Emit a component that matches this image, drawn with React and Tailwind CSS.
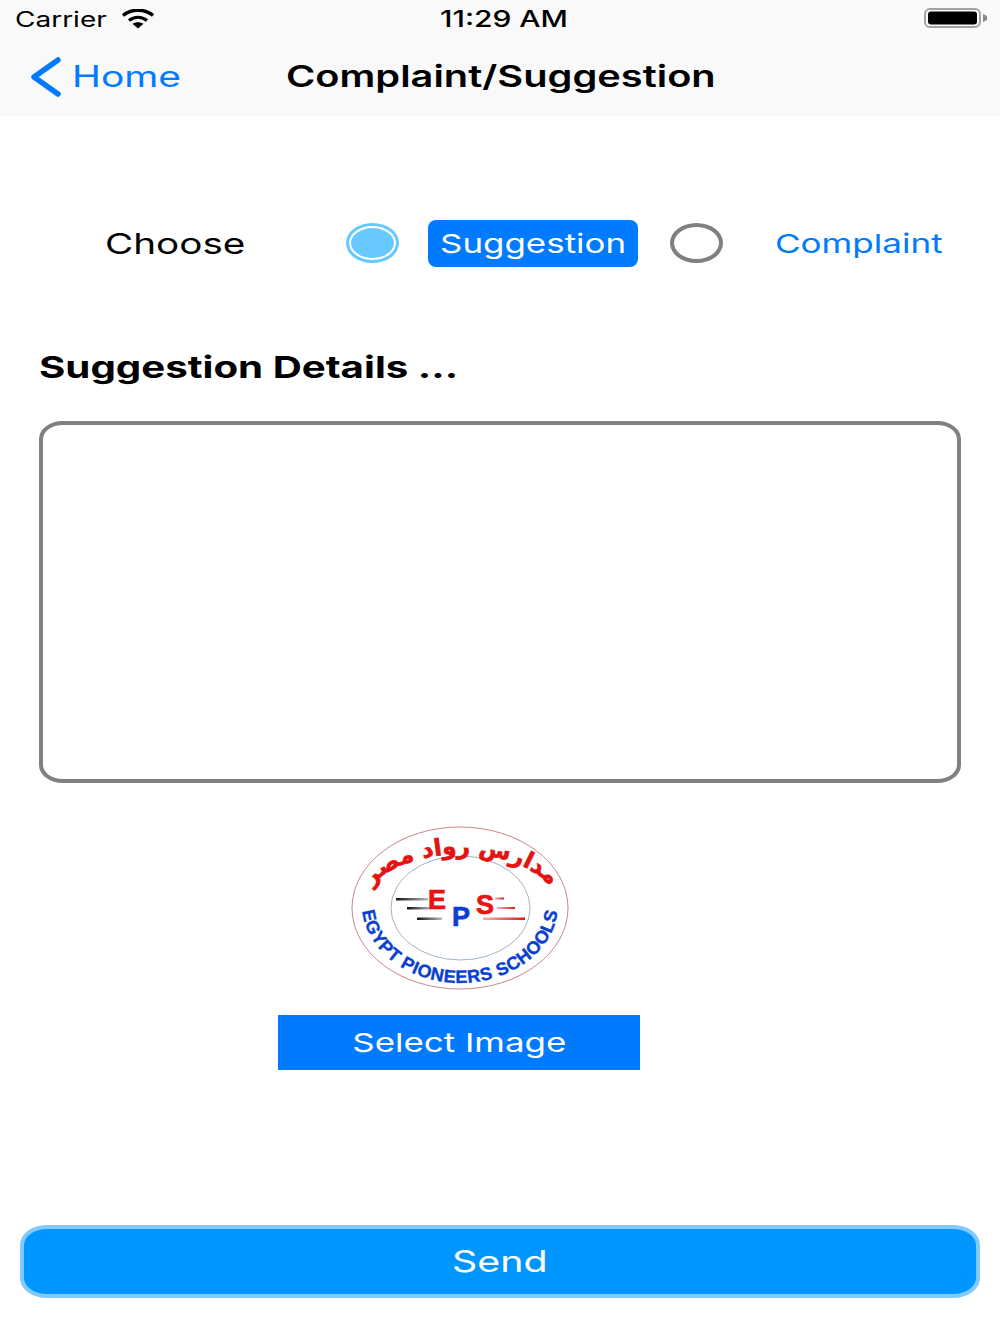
const font = { fontFamily: "Inter, 'Liberation Sans', sans-serif" };

function S({ children, className = "" }) {
  return <span className={`inline-block whitespace-nowrap origin-left scale-x-[1.333] ${className}`}>{children}</span>;
}
function C({ children, className = "" }) {
  return <span className={`inline-block whitespace-nowrap origin-center scale-x-[1.333] ${className}`}>{children}</span>;
}

function Wifi() {
  return (
    <svg width="34" height="20" viewBox="0 0 34 20" fill="none" stroke="#000" strokeWidth="3.4" className="-ml-[1px]">
      <path d="M2 6.5 C10 -0.5 24 -0.5 32 6.5" />
      <path d="M8 11.5 C13.5 7.3 20.5 7.3 26 11.5" />
      <path d="M17 19.5 L11.5 14.8 C14.5 12.6 19.5 12.6 22.5 14.8 Z" fill="#000" stroke="none" />
    </svg>
  );
}

function Battery() {
  return (
    <svg width="64" height="22" viewBox="0 0 64 22">
      <rect x="1" y="1" width="55" height="18" rx="5" fill="none" stroke="#a3a3a3" strokeWidth="2" />
      <rect x="4" y="3.5" width="49" height="13" rx="3" fill="#000" />
      <path d="M59 6 L63 8 V12 L59 14 Z" fill="#8a8a8a" />
    </svg>
  );
}

function Logo() {
  return (
    <svg width="240" height="180" viewBox="340 820 240 180" className="block">
      <defs>
        <linearGradient id="bl" x1="0" x2="1" y1="0" y2="0">
          <stop offset="0" stopColor="#111" />
          <stop offset="1" stopColor="#bbb" />
        </linearGradient>
        <linearGradient id="rd" x1="0" x2="1" y1="0" y2="0">
          <stop offset="0" stopColor="#f8b0b0" />
          <stop offset="1" stopColor="#e01818" />
        </linearGradient>
        <path id="lower" d="M 362 904 A 98 79 0 0 0 558 904" />
        <path id="upper" d="M 361 912 A 100 58 0 0 1 561 912" />
      </defs>
      <ellipse cx="460" cy="908" rx="108" ry="81" fill="#fff" stroke="#c98a8a" strokeWidth="1" />
      <ellipse cx="460.5" cy="908" rx="69.5" ry="52" fill="#fff" stroke="#8aa0b4" strokeWidth="0.8" />
      <rect x="396" y="898" width="32" height="2.5" fill="url(#bl)" />
      <rect x="407" y="907" width="24" height="2.5" fill="url(#bl)" />
      <rect x="417" y="917.5" width="25" height="2.5" fill="url(#bl)" />
      <rect x="495" y="897.5" width="9" height="2" fill="url(#rd)" />
      <rect x="497" y="907" width="18" height="2" fill="url(#rd)" />
      <rect x="483" y="917.5" width="42" height="2.5" fill="url(#rd)" />
      <g fontFamily="'Liberation Sans', sans-serif" fontWeight="700" fontSize="27" strokeWidth="0.7">
        <text x="428" y="909" fill="#ee1111" stroke="#ee1111">E</text>
        <text x="452" y="926" fill="#0a3fd0" stroke="#0a3fd0">P</text>
        <text x="476" y="914" fill="#ee1111" stroke="#ee1111">S</text>
      </g>
      <text fontFamily="'Liberation Sans', sans-serif" fontWeight="700" fontSize="18" letterSpacing="0.5" fill="#0a3fd0" stroke="#0a3fd0" strokeWidth="0.4">
        <textPath href="#lower" startOffset="50%" textAnchor="middle">EGYPT PIONEERS SCHOOLS</textPath>
      </text>
      <text fontFamily="'DejaVu Sans', sans-serif" fontWeight="700" fontSize="23" fill="#e51212" stroke="#e51212" strokeWidth="0.7" direction="rtl">
        <textPath href="#upper" startOffset="50%" textAnchor="middle">مدارس رواد مصر</textPath>
      </text>
    </svg>
  );
}

export default function App() {
  return (
    <div style={font} className="w-[1000px] h-[1334px] bg-white flex flex-col overflow-hidden text-black">
      <header className="h-[116px] bg-[#f9f9f9] flex flex-col shrink-0">
        <div className="h-[38px] flex items-center pl-[15px]">
          <div className="w-[107px] text-[21px] leading-none"><S>Carrier</S></div>
          <Wifi />
          <div className="ml-[285px] w-[484px] text-[22.5px] font-medium leading-none"><S>11:29 AM</S></div>
          <Battery />
        </div>
        <div className="flex-1 flex items-center pl-[32px] pb-[1px]">
          <svg width="30" height="40" viewBox="0 0 30 40" fill="none" stroke="#007aff" strokeWidth="5.5" strokeLinecap="round" strokeLinejoin="round" className="shrink-0 -ml-[1px]">
            <path d="M27 3 L3 20 L27 37" />
          </svg>
          <div className="ml-[11px] w-[214px] text-[29.2px] text-[#007aff] leading-none"><S>Home</S></div>
          <div className="text-[29.85px] font-semibold leading-none"><S>Complaint/Suggestion</S></div>
        </div>
      </header>

      <main className="flex-1 flex flex-col">
        <div className="mt-[104px] h-[47px] flex items-center pl-[106px]">
          <div className="w-[241px] text-[29px] leading-none -ml-[1px]"><S>Choose</S></div>
          <div className="w-[53px] h-[40px] mb-[1px] rounded-[50%] bg-[#66c9ff] border-[3px] border-[#66c9ff] shrink-0 flex items-center justify-center">
            <div className="w-full h-full rounded-[50%] border-[2px] border-white" />
          </div>
          <div className="ml-[29px] w-[210px] h-[47px] rounded-[8px] bg-[#007aff] text-white text-[26.2px] leading-none flex items-center pl-[12px] pt-[1px] shrink-0"><S>Suggestion</S></div>
          <div className="ml-[32px] mb-[1px] w-[53px] h-[40px] rounded-[50%] border-[4px] border-[#808080] shrink-0" />
          <div className="ml-[52px] pt-[1px] text-[26.3px] text-[#007aff] leading-none"><S>Complaint</S></div>
        </div>

        <div className="mt-[85px] pl-[39px] text-[30.2px] font-bold leading-none"><S>Suggestion Details ...</S></div>

        <div className="mt-[39px] mx-[39px] h-[362px] rounded-[24px/18px] border-[4px] border-[#808080]" />

        <div className="mt-[37px] flex justify-center pr-[80px] h-[180px] items-start">
          <Logo />
        </div>
        <div className="mt-[15px] ml-[278px] w-[362px] h-[55px] bg-[#007aff] text-white text-[26.2px] leading-none flex items-center justify-center"><C>Select Image</C></div>

        <div className="mt-[155px] mx-[20px] h-[73px] rounded-[27px/20px] bg-[#0096ff] border-[4px] border-[#80caff] text-white text-[29.5px] leading-none flex items-center justify-center"><C>Send</C></div>
      </main>
    </div>
  );
}
